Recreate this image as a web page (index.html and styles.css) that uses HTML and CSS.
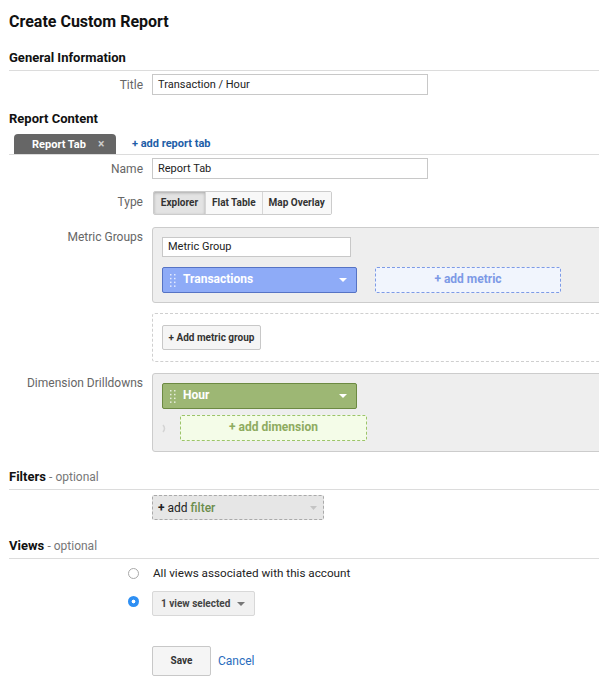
FILE: index.html
```html
<!DOCTYPE html>
<html>
<head>
<meta charset="utf-8">
<title>Create Custom Report</title>
<link rel="stylesheet" href="styles.css">
</head>
<body>
<div class="page">
  <h1 class="title">Create Custom Report</h1>

  <h2 class="sec">General Information</h2>
  <div class="row row-title">
    <div class="lbl">Title</div>
    <div class="ctl"><div class="field w-wide">Transaction / Hour</div></div>
  </div>

  <h2 class="sec sec-content">Report Content</h2>
  <div class="tabbar">
    <div class="tab"><span class="tab-name">Report Tab</span><span class="tab-x">×</span></div>
    <a class="add-tab">+ add report tab</a>
  </div>
  <div class="row row-name">
    <div class="lbl">Name</div>
    <div class="ctl"><div class="field w-wide">Report Tab</div></div>
  </div>
  <div class="row row-type">
    <div class="lbl">Type</div>
    <div class="ctl">
      <div class="btngroup">
        <span class="seg seg-on">Explorer</span><span class="seg">Flat Table</span><span class="seg">Map Overlay</span>
      </div>
    </div>
  </div>

  <div class="row row-box">
    <div class="lbl lbl-top">Metric Groups</div>
    <div class="ctl">
      <div class="panel panel-metric">
        <div class="field w-group">Metric Group</div>
        <div class="chips">
          <div class="chip chip-blue">
            <svg class="grip" width="6" height="13" viewBox="0 0 6 13"><g fill="#fff" fill-opacity="0.75"><rect x="0" y="0" width="1.5" height="1.5"/><rect x="4" y="0" width="1.5" height="1.5"/><rect x="0" y="3.8" width="1.5" height="1.5"/><rect x="4" y="3.8" width="1.5" height="1.5"/><rect x="0" y="7.6" width="1.5" height="1.5"/><rect x="4" y="7.6" width="1.5" height="1.5"/><rect x="0" y="11.4" width="1.5" height="1.5"/><rect x="4" y="11.4" width="1.5" height="1.5"/></g></svg>
            <span class="chip-text">Transactions</span>
            <svg class="caret" width="8" height="4" viewBox="0 0 8 4"><path d="M0 0H8L4 4Z" fill="#fff"/></svg>
          </div>
          <div class="adder adder-blue">+ add metric</div>
        </div>
      </div>
      <div class="panel-dashed">
        <span class="btn btn-group">+ Add metric group</span>
      </div>
    </div>
  </div>

  <div class="row row-dim">
    <div class="lbl lbl-top">Dimension Drilldowns</div>
    <div class="ctl">
      <div class="panel panel-dim">
        <div class="chip chip-green">
          <svg class="grip" width="6" height="13" viewBox="0 0 6 13"><g fill="#fff" fill-opacity="0.75"><rect x="0" y="0" width="1.5" height="1.5"/><rect x="4" y="0" width="1.5" height="1.5"/><rect x="0" y="3.8" width="1.5" height="1.5"/><rect x="4" y="3.8" width="1.5" height="1.5"/><rect x="0" y="7.6" width="1.5" height="1.5"/><rect x="4" y="7.6" width="1.5" height="1.5"/><rect x="0" y="11.4" width="1.5" height="1.5"/><rect x="4" y="11.4" width="1.5" height="1.5"/></g></svg>
          <span class="chip-text">Hour</span>
          <svg class="caret" width="8" height="4" viewBox="0 0 8 4"><path d="M0 0H8L4 4Z" fill="#fff"/></svg>
        </div>
        <div class="dimrow">
          <svg class="link" width="5" height="9" viewBox="0 0 5 9"><path d="M1 1Q4 4.5 1 8" fill="none" stroke="#d4d4d4" stroke-width="1.5"/></svg>
          <div class="adder adder-green">+ add dimension</div>
        </div>
      </div>
    </div>
  </div>

  <h2 class="sec sec-filters">Filters <span class="opt">- optional</span></h2>
  <div class="row row-filter">
    <div class="lbl"></div>
    <div class="ctl">
      <div class="filter"><span class="f-plus">+</span>&nbsp;add <span class="f-word">filter</span>
        <svg class="caret f-caret" width="7" height="4" viewBox="0 0 7 4"><path d="M0 0H7L3.5 4Z" fill="#c4c4c4"/></svg>
      </div>
    </div>
  </div>

  <h2 class="sec sec-views">Views <span class="opt">- optional</span></h2>
  <div class="row row-radio1">
    <div class="lbl"><span class="radio"></span></div>
    <div class="ctl radio-text">All views associated with this account</div>
  </div>
  <div class="row row-radio2">
    <div class="lbl lbl-radio2"><span class="radio radio-on"></span></div>
    <div class="ctl">
      <div class="dropdown">1 view selected
        <svg class="caret dd-caret" width="8" height="4" viewBox="0 0 8 4"><path d="M0 0H8L4 4Z" fill="#777"/></svg>
      </div>
    </div>
  </div>

  <div class="row row-actions">
    <div class="lbl"></div>
    <div class="ctl actions">
      <span class="btn btn-save">Save</span>
      <a class="cancel">Cancel</a>
    </div>
  </div>
</div>
</body>
</html>
```

FILE: styles.css
```css
html, body {
  margin: 0;
  padding: 0;
  background: #fff;
  overflow: hidden;
}
body {
  font-family: Roboto, "Liberation Sans", Arial, sans-serif;
  color: #222;
}
.page {
  padding-left: 9px;
  width: 590px;
  overflow: hidden;
}
.title {
  margin: 12px 0 0;
  font-size: 16px;
  line-height: 20px;
  font-weight: 700;
  color: #111;
}
.sec {
  margin: 18px 0 0;
  font-size: 13px;
  line-height: 16px;
  font-weight: 700;
  color: #111;
  padding-bottom: 4px;
  border-bottom: 1px solid #dcdcdc;
}
.sec-content {
  border-bottom: none;
  padding-bottom: 0;
  margin-top: 16px;
}
.sec-filters { margin-top: 17px; }
.sec-views { margin-top: 18px; }
.opt {
  font-weight: 400;
  font-size: 12px;
  color: #777;
}

.row {
  display: grid;
  grid-template-columns: 134px 1fr;
  column-gap: 9px;
  align-items: center;
}
.lbl {
  text-align: right;
  font-size: 12px;
  color: #666;
  line-height: 16px;
}
.lbl-top {
  align-self: start;
  padding-top: 2px;
}
.ctl { min-width: 0; }

.row-title { margin-top: 3px; }
.field {
  box-sizing: border-box;
  height: 21px;
  border: 1px solid #c8c8c8;
  background: #fff;
  font-size: 11px;
  line-height: 19px;
  padding: 0 5px;
  color: #222;
}
.w-wide { width: 276px; }
.w-group { width: 189px; height: 20px; line-height: 18px; }

.tabbar {
  margin-top: 7px;
  display: flex;
  align-items: flex-end;
  border-bottom: 1px solid #dcdcdc;
  height: 20px;
}
.tab {
  margin-left: 5px;
  width: 102px;
  height: 20px;
  box-sizing: border-box;
  background: #666;
  border-radius: 4px 4px 0 0;
  color: #fff;
  font-size: 11px;
  font-weight: 700;
  line-height: 21px;
  padding-left: 18px;
  display: flex;
}
.tab-x {
  margin-left: 12px;
  color: #ccc;
  font-size: 12px;
  font-weight: 700;
}
.add-tab {
  margin-left: 16px;
  font-size: 11px;
  font-weight: 700;
  color: #1e5ea8;
  line-height: 21px;
}

.row-name { margin-top: 3px; }
.row-type { margin-top: 12px; }
.row-type .lbl { position: relative; top: -1px; }
.btngroup {
  display: inline-flex;
  height: 24px;
  box-sizing: border-box;
  border: 1px solid #ccc;
  border-radius: 2px;
  margin-left: 1px;
  overflow: hidden;
}
.seg {
  display: block;
  font-size: 10px;
  font-weight: 700;
  color: #333;
  line-height: 22px;
  padding: 0 6px;
  background: #f8f8f8;
  border-left: 1px solid #d6d6d6;
}
.seg:first-child { border-left: none; }
.seg-on {
  background: #e3e3e3;
  box-shadow: inset 0 1px 3px rgba(0,0,0,0.25);
  width: 51px;
  box-sizing: border-box;
  text-align: center;
  padding: 0;
}

.row-box { margin-top: 12px; }
.panel {
  box-sizing: border-box;
  width: 470px;
  background: #eee;
  border: 1px solid #ccc;
  border-radius: 3px;
  padding: 9px 9px 9px;
}
.chips {
  display: flex;
  gap: 18px;
  margin-top: 10px;
}
.chip {
  box-sizing: border-box;
  width: 195px;
  height: 26px;
  border-radius: 2px;
  display: flex;
  align-items: center;
  padding-left: 7px;
  padding-right: 9px;
  color: #fff;
  font-size: 12px;
  font-weight: 700;
}
.chip-blue {
  background: #8eabf7;
  border: 1px solid #5673c4;
}
.chip-green {
  background: #9db774;
  border: 1px solid #6c8a42;
}
.grip { flex: none; }
.chip-text { margin-left: 7px; flex: 1; position: relative; top: -1px; }
.caret { flex: none; }
.adder {
  box-sizing: border-box;
  height: 26px;
  border-radius: 2px;
  font-size: 12px;
  font-weight: 700;
  line-height: 23px;
  text-align: center;
}
.adder-blue {
  width: 186px;
  background: #f1f5fd;
  border: 1px dashed #7e9be6;
  color: #7d9ae6;
}
.adder-green {
  width: 187px;
  background: #f4fce8;
  border: 1px dashed #9cc46a;
  color: #8eab60;
}
.panel-dashed {
  box-sizing: border-box;
  width: 470px;
  margin-top: 10px;
  border: 1px dashed #cfcfcf;
  border-radius: 3px;
  padding: 11px 9px;
}
.btn {
  display: inline-block;
  box-sizing: border-box;
  background: #f5f5f5;
  border: 1px solid #c8c8c8;
  border-radius: 2px;
  font-size: 10px;
  font-weight: 700;
  color: #333;
  text-align: center;
}
.btn-group {
  width: 99px;
  height: 25px;
  line-height: 23px;
}

.row-dim { margin-top: 11px; }
.panel-dim { padding-bottom: 10px; padding-top: 9px; }
.dimrow {
  display: flex;
  align-items: center;
  margin-top: 6px;
}
.link { margin-left: 0; margin-right: 13px; }

.row-filter { margin-top: 5px; }
.filter {
  box-sizing: border-box;
  width: 172px;
  height: 25px;
  background: #e6e6e6;
  border: 1px dashed #aaa;
  border-radius: 2px;
  display: flex;
  align-items: center;
  padding: 0 6px 0 5px;
  font-size: 12px;
  color: #222;
}
.f-plus { font-weight: 700; }
.f-word { margin-left: 3px; color: #6b8c4c; font-weight: 500; flex: 1; }

.row-radio1 { margin-top: 6px; }
.row-radio1 .lbl, .row-radio2 .lbl {
  display: flex;
  justify-content: flex-end;
  padding-right: 4px;
}
.radio {
  display: block;
  box-sizing: border-box;
  width: 11px;
  height: 11px;
  border-radius: 50%;
  border: 1px solid #a9a9a9;
  background: #fff;
}
.radio-on {
  border: none;
  background: radial-gradient(circle, #fff 0 1.6px, #2e8ff3 2.2px);
}
.lbl-radio2 { align-self: start; padding-top: 5px; }
.radio-text {
  font-size: 11.7px;
  line-height: 16px;
  color: #222;
  padding-left: 1px;
}
.row-radio2 { margin-top: 10px; }
.dropdown {
  box-sizing: border-box;
  width: 103px;
  height: 25px;
  background: #f1f1f1;
  border: 1px solid #d8d8d8;
  border-radius: 2px;
  display: flex;
  align-items: center;
  padding: 0 9px 0 8px;
  font-size: 10px;
  font-weight: 700;
  color: #444;
  justify-content: space-between;
}

.row-actions { margin-top: 30px; }
.actions {
  display: flex;
  align-items: center;
}
.btn-save {
  width: 59px;
  height: 30px;
  line-height: 28px;
}
.cancel {
  margin-left: 7px;
  font-size: 12px;
  color: #2a6dbd;
}
```
